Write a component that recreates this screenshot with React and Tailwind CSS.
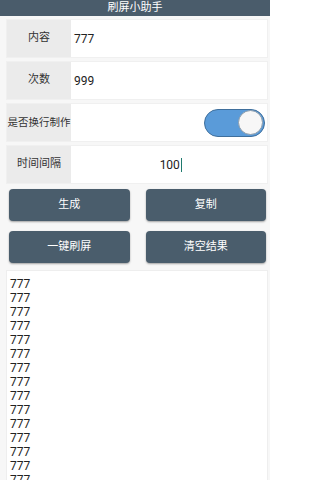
import React from "react";

const FONT = { fontFamily: "Roboto, 'Noto Sans CJK SC', sans-serif" };

function Row({ label, small, children }) {
  return (
    <div className="flex h-[39px] bg-white border border-[#f0f0f0]">
      <div
        className={`w-[64px] shrink-0 bg-[#ebebeb] flex items-center justify-center text-[#333] whitespace-nowrap ${
          small ? "text-[10.5px]" : "text-[11px]"
        }`}
      >
        {label}
      </div>
      <div className="flex-1 flex items-center bg-white">{children}</div>
    </div>
  );
}

function Toggle() {
  return (
    <div className="ml-auto mr-[2px] w-[61px] h-[28px] rounded-full bg-[#5a9bd9] border border-[#3f6f9c] flex items-center justify-end pr-[1px]">
      <div className="w-[25px] h-[25px] rounded-full bg-[#f7f7f7] border border-[#8a9bab]" />
    </div>
  );
}

function Btn({ children }) {
  return (
    <button className="h-[32px] rounded-[4px] bg-[#4a5d6c] text-white text-[11px] shadow-[0_1px_2px_rgba(0,0,0,0.35)]">
      {children}
    </button>
  );
}

export default function App() {
  const lines = Array.from({ length: 16 }, () => "777");
  return (
    <div className="w-[270px] h-[480px] overflow-hidden bg-[#f7f7f7]" style={FONT}>
      <div className="h-[16px] bg-[#4a5c6b] text-white text-[11px] leading-[16px] text-center">
        刷屏小助手
      </div>

      <div className="pl-[6px] pr-[2px] pt-[3px] flex flex-col gap-[3px]">
        <Row label="内容">
          <span className="pl-[3px] text-[12px] text-[#222]">777</span>
        </Row>
        <Row label="次数">
          <span className="pl-[3px] text-[12px] text-[#222]">999</span>
        </Row>
        <Row label="是否换行制作" small>
          <Toggle />
        </Row>
        <Row label="时间间隔">
          <span className="flex-1 text-center text-[12px] text-[#222] pl-[4px]">
            100<span className="inline-block w-[1.5px] h-[14px] bg-[#1f7a6e] align-middle ml-[1px]" />
          </span>
        </Row>
      </div>

      <div className="px-[9px] pr-[4px] pt-[5px] grid grid-cols-2 gap-x-[16px] gap-y-[10px]">
        <Btn>生成</Btn>
        <Btn>复制</Btn>
        <Btn>一键刷屏</Btn>
        <Btn>清空结果</Btn>
      </div>

      <div className="ml-[6px] mr-[2px] mt-[7px] h-[220px] bg-white border border-[#eeeeee] pl-[3px] pt-[6px] overflow-hidden">
        {lines.map((t, i) => (
          <div key={i} className="text-[12px] leading-[14px] text-[#222]">
            {t}
          </div>
        ))}
      </div>
    </div>
  );
}
